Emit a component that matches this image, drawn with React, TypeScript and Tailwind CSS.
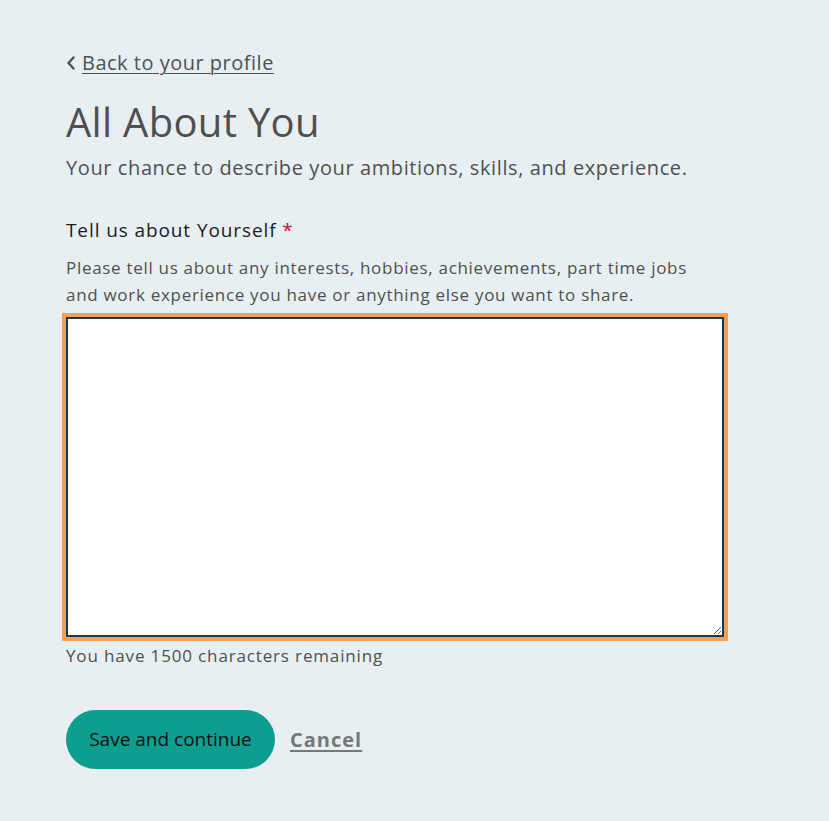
import React, { useState } from 'react';

const MAX = 1500;

export default function App() {
  const [text, setText] = useState('');

  return (
    <div className="min-h-screen bg-[#e8eff3] font-['Open_Sans',sans-serif] text-[#4f4f4f]">
      <div className="flex flex-col pl-[66px] pt-[49px] w-[728px]">
        <a href="#" className="flex items-center h-[28px] text-[20px] leading-[28px] tracking-[0.5px] text-[#4f4f4f] underline underline-offset-[3px] decoration-1">
          <svg className="w-[10px] h-[14px] mr-[6px]" viewBox="0 0 10 14" fill="none" stroke="#4f4f4f" strokeWidth="2.4" strokeLinecap="round" strokeLinejoin="round">
            <path d="M7.5 1.5 2.5 7l5 5.5" />
          </svg>
          Back to your profile
        </a>

        <h1 className="mt-[21px] text-[40px] leading-[48px] tracking-[0.3px] font-normal text-[#4f4f4f]">All About You</h1>
        <p className="mt-[8px] text-[20px] leading-[28px] tracking-[0.6px]">Your chance to describe your ambitions, skills, and experience.</p>

        <label htmlFor="about" className="mt-[34px] text-[19px] leading-[28px] tracking-[0.9px] text-[#1c1c1c]">
          Tell us about Yourself <span className="text-[#e4002b]">*</span>
        </label>
        <p className="mt-[10px] text-[17px] leading-[27px] tracking-[0.7px] w-[640px]">
          Please tell us about any interests, hobbies, achievements, part time jobs and work experience you have or anything else you want to share.
        </p>

        <div className="mt-[5px] ml-[-4px] border-4 border-[#fd9e4b]">
          <textarea
            id="about"
            value={text}
            maxLength={MAX}
            onChange={(e) => setText(e.target.value)}
            className="block w-full h-[320px] bg-white border-2 border-[#0b3a5c] outline-none p-2"
          />
        </div>

        <p className="mt-[3px] text-[17px] leading-[24px] tracking-[0.85px]">You have {MAX - text.length} characters remaining</p>

        <div className="mt-[42px] flex items-center gap-[15px]">
          <button className="h-[59px] w-[209px] rounded-full bg-[#0d9e8f] text-[19px] text-[#111]">
            Save and continue
          </button>
          <a href="#" className="text-[20px] font-bold tracking-[1px] text-[#777] underline underline-offset-[3px]">Cancel</a>
        </div>
      </div>
    </div>
  );
}
